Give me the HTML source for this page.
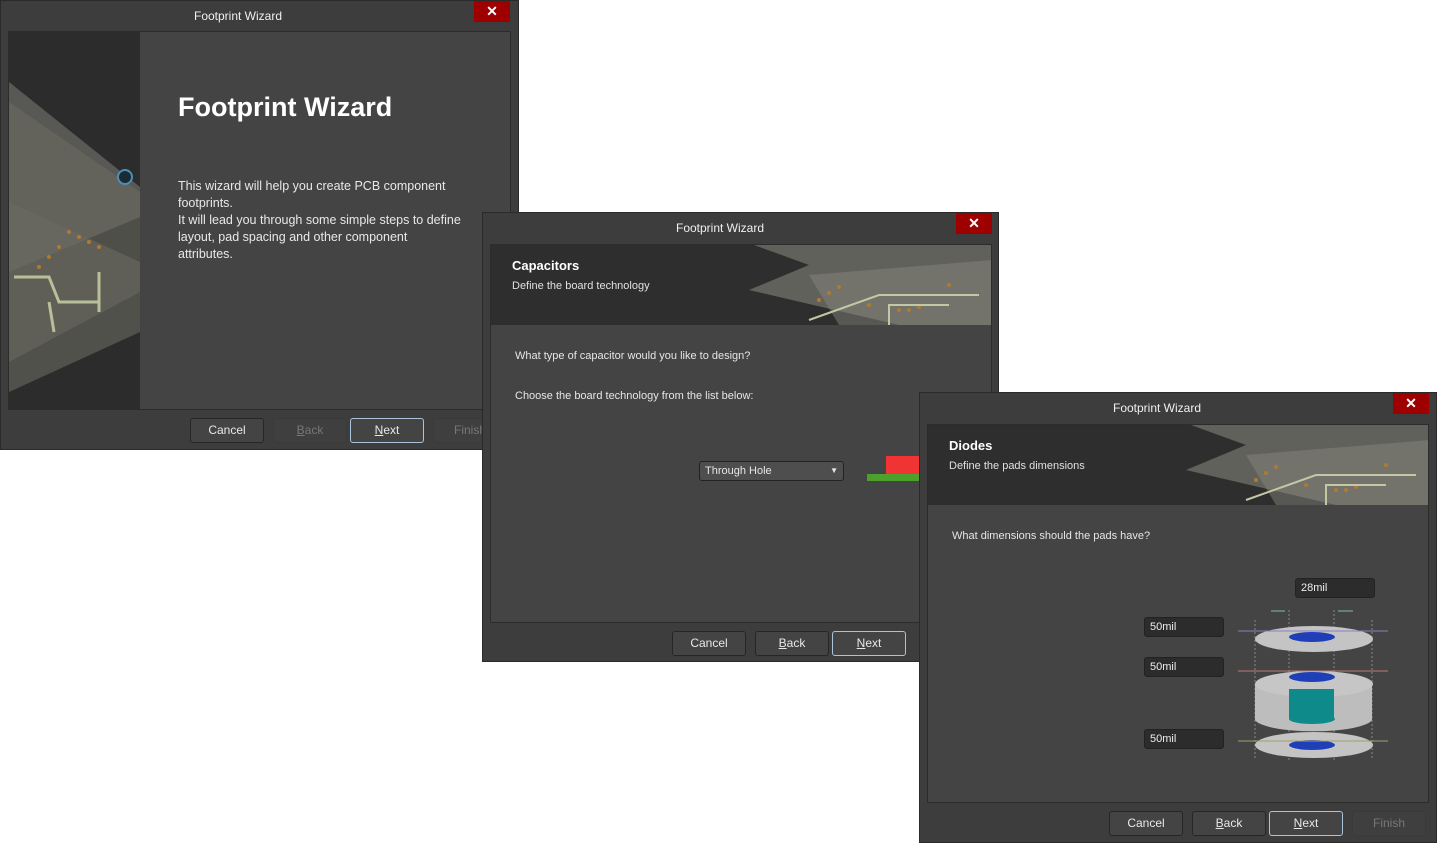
<!DOCTYPE html>
<html><head><meta charset="utf-8"><style>
*{box-sizing:border-box;margin:0;padding:0}
body{width:1437px;height:843px;background:#fff;position:relative;overflow:hidden;font-family:"Liberation Sans",sans-serif;color:#e6e6e6}
.dlg{position:absolute;background:#3d3d3d;border:1px solid #2a2a2a}
.title{position:absolute;left:0;width:474px;top:0;height:31px;text-align:center;font-size:12px;line-height:31px;color:#f0f0f0}
.close{position:absolute;top:0;width:36px;height:21px;background:#9e0000;color:#fff;font-size:14px;font-weight:bold;text-align:center;line-height:21px}
.inner{position:absolute;background:#444;border:1px solid #2c2c2c}
.btn{position:absolute;width:74px;height:25px;border:1px solid #262626;border-radius:3px;background:#444;font-size:12px;text-align:center;line-height:23px;color:#e8e8e8}
.btn.next{border-color:#a9c4da}
.btn.dis{color:#777;border-color:#3a3a3a;background:#3f3f3f}
.hdr{position:absolute;left:0;right:0;top:0;height:80px;background:#2e2e2e;overflow:hidden}
.h1{position:absolute;left:21px;top:13px;font-weight:bold;font-size:13px;color:#fff}
.h2{position:absolute;left:21px;top:35px;font-size:11px;color:#e0e0e0}
.txt{position:absolute;font-size:11px;color:#e6e6e6}
.field{position:absolute;width:80px;height:20px;background:#2c2c2c;border:1px solid #222;border-radius:3px;font-size:11px;line-height:18px;padding-left:5px;color:#eee}
u{text-decoration:underline}
</style></head><body>

<!-- Dialog 1 -->
<div class="dlg" style="left:0;top:0;width:519px;height:450px">
  <div class="title">Footprint Wizard</div>
  <div class="close" style="left:473px">✕</div>
  <div class="inner" style="left:7px;top:30px;width:503px;height:379px">
    <div style="position:absolute;left:0;top:0;width:131px;height:377px;background:#2c2c2c;overflow:hidden">
      <svg width="131" height="377">
        <polygon points="0,50 131,155 131,185 0,240" fill="#77776f" opacity=".6"/>
        <polygon points="0,70 131,160 131,260 0,330" fill="#6e6d62" opacity=".55"/>
        <polygon points="0,170 131,230 131,300 0,360" fill="#6a6a62" opacity=".6"/>
        <circle cx="116" cy="145" r="7" fill="#1c2a33" stroke="#4a8fb8" stroke-width="2"/>
        <g fill="#b07a30"><circle cx="60" cy="200" r="2"/><circle cx="70" cy="205" r="2"/><circle cx="80" cy="210" r="2"/><circle cx="50" cy="215" r="2"/><circle cx="40" cy="225" r="2"/><circle cx="90" cy="215" r="2"/><circle cx="30" cy="235" r="2"/></g>
        <path d="M5 245 L40 245 L50 270 L90 270 M90 240 L90 280 M40 270 L45 300" stroke="#b8c09a" stroke-width="3" fill="none"/>
      </svg>
    </div>
    <div style="position:absolute;left:169px;top:60px;font-size:27px;font-weight:bold;color:#fff">Footprint Wizard</div>
    <div style="position:absolute;left:169px;top:146px;width:330px;white-space:nowrap;font-size:12.5px;line-height:17px;color:#e8e8e8">This wizard will help you create PCB component<br>footprints.<br>It will lead you through some simple steps to define<br>layout, pad spacing and other component<br>attributes.</div>
  </div>
  <div class="btn" style="left:189px;top:417px">Cancel</div>
  <div class="btn dis" style="left:272px;top:417px"><u>B</u>ack</div>
  <div class="btn next" style="left:349px;top:417px"><u>N</u>ext</div>
  <div class="btn dis" style="left:432px;top:417px">Finish</div>
</div>

<!-- Dialog 2 -->
<div class="dlg" style="left:482px;top:212px;width:517px;height:450px">
  <div class="title">Footprint Wizard</div>
  <div class="close" style="left:473px">✕</div>
  <div class="inner" style="left:7px;top:31px;width:502px;height:379px">
    <div class="hdr">
      <svg style="position:absolute;left:258px;top:0" width="244" height="80">
        <polygon points="5,0 244,0 244,80 150,80 0,45 60,20" fill="#77776f" opacity=".7"/>
        <polygon points="60,30 244,15 244,80 90,80" fill="#8a8a80" opacity=".45"/>
        <g fill="#b07a30"><circle cx="70" cy="55" r="2"/><circle cx="80" cy="48" r="2"/><circle cx="90" cy="42" r="2"/><circle cx="120" cy="60" r="2"/><circle cx="150" cy="65" r="2"/><circle cx="160" cy="65" r="2"/><circle cx="170" cy="62" r="2"/><circle cx="200" cy="40" r="2"/></g>
        <path d="M60 75 L130 50 L230 50 M140 80 L140 60 L200 60" stroke="#c2c8a4" stroke-width="2" fill="none"/>
      </svg>
      <div class="h1">Capacitors</div>
      <div class="h2">Define the board technology</div>
    </div>
    <div class="txt" style="left:24px;top:105px">What type of capacitor would you like to design?</div>
    <div class="txt" style="left:24px;top:145px">Choose the board technology from the list below:</div>
    <div style="position:absolute;left:208px;top:216px;width:145px;height:20px;background:#4e4e4e;border:1px solid #222;border-radius:3px;font-size:11px;line-height:18px;padding-left:5px">Through Hole<span style="position:absolute;right:5px;top:0;font-size:8px">▼</span></div>
    <div style="position:absolute;left:395px;top:211px;width:40px;height:18px;background:#f03434"></div>
    <div style="position:absolute;left:376px;top:229px;width:60px;height:7px;background:#4ca02c"></div>
  </div>
  <div class="btn" style="left:189px;top:418px">Cancel</div>
  <div class="btn" style="left:272px;top:418px"><u>B</u>ack</div>
  <div class="btn next" style="left:349px;top:418px"><u>N</u>ext</div>
</div>

<!-- Dialog 3 -->
<div class="dlg" style="left:919px;top:392px;width:518px;height:451px">
  <div class="title">Footprint Wizard</div>
  <div class="close" style="left:473px">✕</div>
  <div class="inner" style="left:7px;top:31px;width:502px;height:379px">
    <div class="hdr">
      <svg style="position:absolute;left:258px;top:0" width="244" height="80">
        <polygon points="5,0 244,0 244,80 150,80 0,45 60,20" fill="#77776f" opacity=".7"/>
        <polygon points="60,30 244,15 244,80 90,80" fill="#8a8a80" opacity=".45"/>
        <g fill="#b07a30"><circle cx="70" cy="55" r="2"/><circle cx="80" cy="48" r="2"/><circle cx="90" cy="42" r="2"/><circle cx="120" cy="60" r="2"/><circle cx="150" cy="65" r="2"/><circle cx="160" cy="65" r="2"/><circle cx="170" cy="62" r="2"/><circle cx="200" cy="40" r="2"/></g>
        <path d="M60 75 L130 50 L230 50 M140 80 L140 60 L200 60" stroke="#c2c8a4" stroke-width="2" fill="none"/>
      </svg>
      <div class="h1">Diodes</div>
      <div class="h2">Define the pads dimensions</div>
    </div>
    <div class="txt" style="left:24px;top:105px">What dimensions should the pads have?</div>
    <div class="field" style="left:367px;top:153px">28mil</div>
    <div class="field" style="left:216px;top:192px">50mil</div>
    <div class="field" style="left:216px;top:232px">50mil</div>
    <div class="field" style="left:216px;top:304px">50mil</div>
    <svg style="position:absolute;left:310px;top:180px" width="160" height="160">
      <g stroke="#888" stroke-dasharray="2,2" stroke-width="1"><line x1="51" y1="5" x2="51" y2="155"/><line x1="96" y1="5" x2="96" y2="155"/><line x1="17" y1="15" x2="17" y2="155"/><line x1="134" y1="15" x2="134" y2="155"/></g>
      <ellipse cx="76" cy="34" rx="59" ry="13" fill="#c4c4c4"/>
      <ellipse cx="74" cy="32" rx="23" ry="5" fill="#1e3fb8"/>
      <path d="M17 79 L17 115 A59 13 0 0 0 134 115 L134 79 Z" fill="#bdbdbd"/>
      <ellipse cx="76" cy="79" rx="59" ry="13" fill="#c6c6c6"/>
      <rect x="51" y="84" width="45" height="30" fill="#0f8a8a"/>
      <ellipse cx="74" cy="114" rx="23" ry="5" fill="#0f8a8a"/>
      <ellipse cx="74" cy="72" rx="23" ry="5" fill="#1e3fb8"/>
      <ellipse cx="76" cy="140" rx="59" ry="13" fill="#c4c4c4"/>
      <ellipse cx="74" cy="140" rx="23" ry="5" fill="#1e3fb8"/>
      <line x1="0" y1="26" x2="150" y2="26" stroke="#8a80c0"/>
      <line x1="0" y1="66" x2="150" y2="66" stroke="#c07a7a"/>
      <line x1="0" y1="136" x2="150" y2="136" stroke="#a0a070"/>
      <line x1="33" y1="6" x2="47" y2="6" stroke="#7ac0a0"/>
      <line x1="100" y1="6" x2="115" y2="6" stroke="#7ac0a0"/>
    </svg>
  </div>
  <div class="btn" style="left:189px;top:418px">Cancel</div>
  <div class="btn" style="left:272px;top:418px"><u>B</u>ack</div>
  <div class="btn next" style="left:349px;top:418px"><u>N</u>ext</div>
  <div class="btn dis" style="left:432px;top:418px">Finish</div>
</div>
</body></html>
